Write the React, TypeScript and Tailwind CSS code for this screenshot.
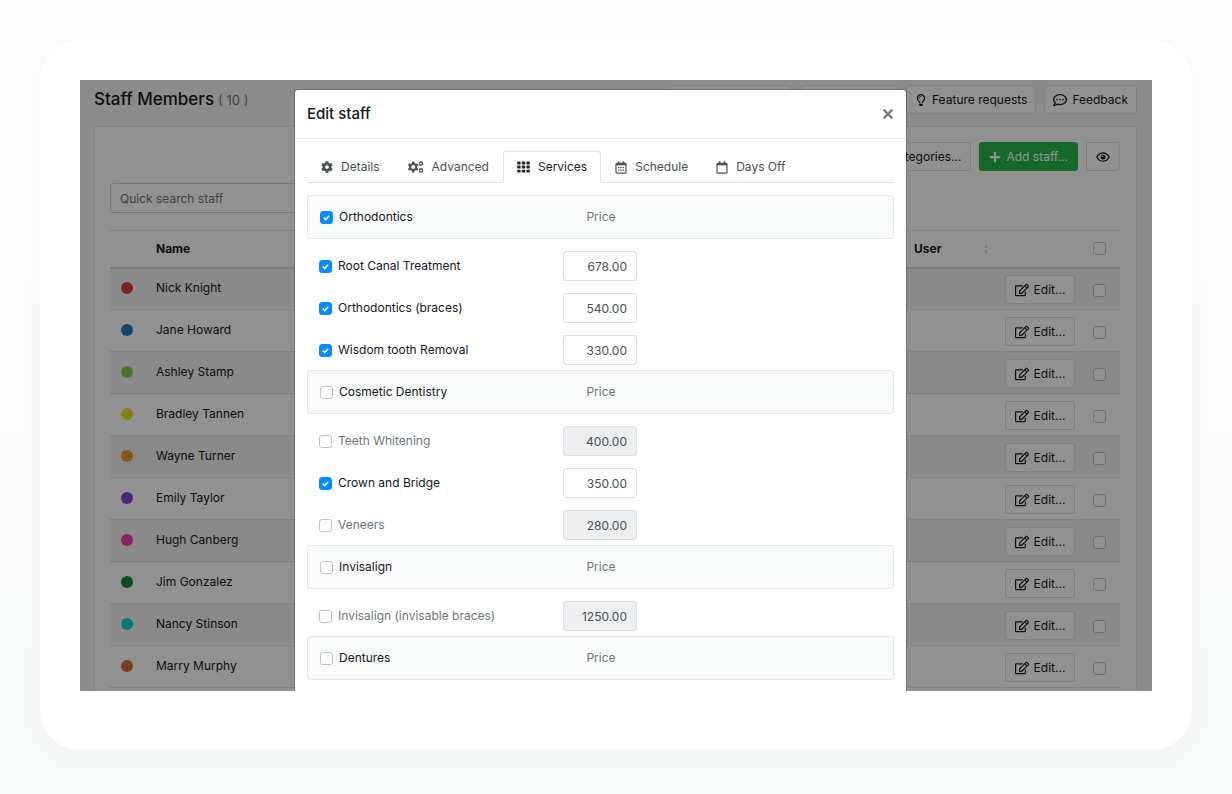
import { useState, type InputHTMLAttributes, type ReactNode } from "react";
import { FaCog, FaPlus, FaRegCommentDots, FaRegEdit, FaRegLightbulb } from "react-icons/fa";

type Service = { name: string; price: string; enabled: boolean };
type Category = { name: string; enabled: boolean; services: Service[] };

const staff = [
  { name: "Nick Knight", dot: "bg-[#e53a30]" },
  { name: "Jane Howard", dot: "bg-[#1c7fc4]" },
  { name: "Ashley Stamp", dot: "bg-[#83d146]" },
  { name: "Bradley Tannen", dot: "bg-[#ebe32a]" },
  { name: "Wayne Turner", dot: "bg-[#e69a35]" },
  { name: "Emily Taylor", dot: "bg-[#8a3fe0]" },
  { name: "Hugh Canberg", dot: "bg-[#f13cb5]" },
  { name: "Jim Gonzalez", dot: "bg-[#0c8f37]" },
  { name: "Nancy Stinson", dot: "bg-[#17d3d8]" },
  { name: "Marry Murphy", dot: "bg-[#d96b35]" },
];

const initialCategories: Category[] = [
  {
    name: "Orthodontics",
    enabled: true,
    services: [
      { name: "Root Canal Treatment", price: "678.00", enabled: true },
      { name: "Orthodontics (braces)", price: "540.00", enabled: true },
      { name: "Wisdom tooth Removal", price: "330.00", enabled: true },
    ],
  },
  {
    name: "Cosmetic Dentistry",
    enabled: false,
    services: [
      { name: "Teeth Whitening", price: "400.00", enabled: false },
      { name: "Crown and Bridge", price: "350.00", enabled: true },
      { name: "Veneers", price: "280.00", enabled: false },
    ],
  },
  {
    name: "Invisalign",
    enabled: false,
    services: [{ name: "Invisalign (invisable braces)", price: "1250.00", enabled: false }],
  },
  { name: "Dentures", enabled: false, services: [] },
];

function GearsIcon() {
  return (
    <svg viewBox="0 0 16 12" className="h-3 w-4" fill="none" stroke="currentColor" aria-hidden="true">
      <circle cx="5.2" cy="6" r="3" strokeWidth="2" />
      <path
        d="M5.2 .6v2M5.2 9.4v2M.5 3.3l1.8 1M8.1 7.7l1.8 1M.5 8.7l1.8-1M8.1 4.3l1.8-1"
        strokeWidth="2.4"
      />
      <circle cx="13" cy="2.6" r="1.6" strokeWidth="1.4" />
      <circle cx="13" cy="9.4" r="1.6" strokeWidth="1.4" />
    </svg>
  );
}

function GridIcon() {
  return (
    <svg viewBox="0 0 13 12" className="h-3 w-[13px]" fill="currentColor" aria-hidden="true">
      {[0.2, 4.8, 9.4].map((x) =>
        [0.5, 4.6, 8.7].map((y) => <rect key={`${x}-${y}`} x={x} y={y} width="3.4" height="2.9" rx=".4" />),
      )}
    </svg>
  );
}

function CalendarIcon({ days = false }: { days?: boolean }) {
  return (
    <svg viewBox="0 0 12 13" className="h-[13px] w-3" fill="none" stroke="currentColor" aria-hidden="true">
      <rect x="1" y="2.3" width="10" height="9.9" rx="1" strokeWidth="1.2" />
      <path d="M.9 3.3h10.2" strokeWidth="2" />
      <path d="M3.5 .3v2.4M8.5 .3v2.4" strokeWidth="1.6" />
      {days && <path d="M3 6.7h6M3 9.2h6" strokeWidth="1.3" strokeDasharray="1.4 .9" />}
    </svg>
  );
}

function EyeIcon() {
  return (
    <svg viewBox="0 0 14 12" className="h-3 w-3.5" fill="none" stroke="currentColor" aria-hidden="true">
      <path d="M.7 6C2.2 3.3 4.4 1.8 7 1.8S11.8 3.3 13.3 6C11.8 8.7 9.6 10.2 7 10.2S2.2 8.7 .7 6Z" strokeWidth="1.2" />
      <circle cx="7" cy="6" r="2.5" fill="currentColor" stroke="none" />
      <circle cx="6.2" cy="5.2" r=".8" fill="#fff" stroke="none" />
    </svg>
  );
}

function Checkbox(props: InputHTMLAttributes<HTMLInputElement>) {
  return (
    <span className="grid size-[13px] shrink-0 *:col-start-1 *:row-start-1">
      <input
        type="checkbox"
        className="peer size-[13px] appearance-none rounded-[3px] border border-[#bcc2c8] bg-white checked:border-[#058bff] checked:bg-[#058bff]"
        {...props}
      />
      <svg
        viewBox="0 0 13 13"
        className="pointer-events-none hidden size-[13px] text-white peer-checked:block"
        fill="none"
        stroke="currentColor"
        strokeWidth="1.6"
        aria-hidden="true"
      >
        <path d="M3.8 6.7l1.9 1.8 3.5-3.8" />
      </svg>
    </span>
  );
}

function Button({ children, className = "", label }: { children?: ReactNode; className?: string; label?: string }) {
  return (
    <button
      type="button"
      aria-label={label}
      className={`flex h-[29px] items-center gap-[5px] rounded-[3px] border border-[#dadde1] bg-white whitespace-nowrap ${className}`}
    >
      {children}
    </button>
  );
}

function StaffPage() {
  return (
    <div className="flex flex-col pt-[5px] pr-[15px] pl-3.5">
      <header className="flex items-start justify-between">
        <h1 className="flex items-baseline gap-1 text-[17px] leading-[29px] font-medium">
          Staff Members <small className="text-[13px] font-normal text-[#6c757d]">( 10 )</small>
        </h1>
        <div className="flex gap-2">
          <Button className="w-[122px]" label="Export" />
          <Button className="w-[98px]" label="Import" />
          <Button className="px-2">
            <FaRegLightbulb className="size-3" /> Feature requests
          </Button>
          <Button className="px-2">
            <FaRegCommentDots className="size-3.5" /> Feedback
          </Button>
        </div>
      </header>

      <section className="mt-[11px] flex flex-col rounded-[3px] border border-[#e2e4e7] bg-white pt-[15px] pr-4 pb-10 pl-[15px]">
        <div className="flex justify-end gap-2">
          <Button className="px-[9px]">Categories...</Button>
          <button
            type="button"
            className="flex h-[29px] items-center gap-[5px] rounded-[3px] bg-[#28b84c] px-2.5 whitespace-nowrap text-white"
          >
            <FaPlus className="size-3" /> Add staff...
          </button>
          <Button label="Visible columns" className="px-[9px]">
            <EyeIcon />
          </Button>
        </div>
        <input
          type="search"
          aria-label="Quick search staff"
          placeholder="Quick search staff"
          className="mt-3 h-[30px] w-80 rounded-[3px] border border-[#ced4da] bg-white px-[9px] placeholder:text-[#6c757d]"
        />
        <table className="mt-[17px] w-full table-fixed border-collapse text-left">
          <thead>
            <tr className="h-[37px] border-t border-b-2 border-t-[#dee2e6] border-b-[#d3d6da]">
              <th className="w-[46px]" aria-label="Colour" />
              <th className="font-bold">Name</th>
              <th className="w-[91px] font-bold">
                <span className="flex items-center justify-between pr-4">
                  User
                  <svg viewBox="0 0 6 12" className="h-3 w-1.5 text-[#cdd0d4]" fill="currentColor" aria-hidden="true">
                    <path d="M3 1l2 3.5H1zM3 11L1 7.5h4z" />
                  </svg>
                </span>
              </th>
              <th className="w-[70px]" aria-label="Actions" />
              <th className="w-[45px]">
                <span className="flex pl-[18px]">
                  <Checkbox aria-label="Select all staff" />
                </span>
              </th>
            </tr>
          </thead>
          <tbody>
            {staff.map(({ name, dot }) => (
              <tr key={name} className="h-[42px] border-b border-[#dee2e6] odd:bg-[#f2f2f2]">
                <td className="pb-0.5 pl-[11px]">
                  <span className={`block size-3 rounded-full ${dot}`} />
                </td>
                <td className="pb-0.5">{name}</td>
                <td />
                <td className="pt-0.5">
                  <Button className="w-full justify-center">
                    <FaRegEdit className="size-3.5" /> Edit...
                  </Button>
                </td>
                <td className="pt-1">
                  <span className="flex pl-[18px]">
                    <Checkbox aria-label={`Select ${name}`} />
                  </span>
                </td>
              </tr>
            ))}
          </tbody>
        </table>
      </section>
    </div>
  );
}

const tabs: { label: string; icon: ReactNode }[] = [
  { label: "Details", icon: <FaCog className="size-3" /> },
  { label: "Advanced", icon: <GearsIcon /> },
  { label: "Services", icon: <GridIcon /> },
  { label: "Schedule", icon: <CalendarIcon days /> },
  { label: "Days Off", icon: <CalendarIcon /> },
];

function EditStaffDialog() {
  const [active, setActive] = useState("Services");
  const [categories, setCategories] = useState(initialCategories);

  const toggleCategory = (index: number) =>
    setCategories((all) => all.map((c, i) => (i === index ? { ...c, enabled: !c.enabled } : c)));

  const updateService = (index: number, name: string, change: Partial<Service>) =>
    setCategories((all) =>
      all.map((c, i) =>
        i === index ? { ...c, services: c.services.map((s) => (s.name === name ? { ...s, ...change } : s)) } : c,
      ),
    );

  return (
    <div
      role="dialog"
      aria-labelledby="dialog-title"
      className="flex w-full max-w-[613px] flex-col self-stretch rounded-t border border-b-0 border-black/20 bg-white bg-clip-padding"
    >
      <header className="flex items-center justify-between border-b border-[#e9ecef] px-3 py-3">
        <h2 id="dialog-title" className="text-[15px] leading-6 font-medium">
          Edit staff
        </h2>
        <button type="button" aria-label="Close" className="text-[#7f7f7f]">
          <svg viewBox="0 0 12 12" className="size-3" fill="none" stroke="currentColor" strokeWidth="2.4">
            <path d="M1.7 1.7l8.6 8.6M10.3 1.7l-8.6 8.6" />
          </svg>
        </button>
      </header>
      <div className="flex flex-col gap-3 px-3 pt-3">
        <div role="tablist" className="flex border-b border-[#dee2e6]">
          {tabs.map(({ label, icon }) => (
            <button
              key={label}
              type="button"
              role="tab"
              aria-selected={active === label}
              onClick={() => setActive(label)}
              className="-mb-px flex h-8 items-center gap-2 rounded-t-[3px] border border-transparent px-[13px] whitespace-nowrap text-[#495057] aria-selected:border-[#dee2e6] aria-selected:border-b-white aria-selected:bg-white aria-selected:text-[#212529]"
            >
              {icon}
              {label}
            </button>
          ))}
        </div>
        <div role="tabpanel" className="flex flex-col">
          {categories.map((category, index) => (
            <section key={category.name} className="flex flex-col">
              <div className="grid h-11 grid-cols-[244px_74px] items-center rounded-[3px] border border-[#e3e7e7] bg-[#f9fbfa] px-3">
                <label className="flex items-center gap-1.5">
                  <Checkbox checked={category.enabled} onChange={() => toggleCategory(index)} />
                  {category.name}
                </label>
                <span className="text-center text-[#6c757d]">Price</span>
              </div>
              {category.services.length > 0 && (
                <ul className="flex flex-col gap-3 px-3 pt-3 pb-[5px]">
                  {category.services.map(({ name, price, enabled }) => (
                    <li key={name} className="grid grid-cols-[244px_74px] items-center">
                      <label className={`flex items-center gap-1.5 ${enabled ? "" : "text-[#6c757d]"}`}>
                        <Checkbox
                          checked={enabled}
                          onChange={() => updateService(index, name, { enabled: !enabled })}
                        />
                        {name}
                      </label>
                      <input
                        type="text"
                        aria-label={`Price of ${name}`}
                        value={price}
                        disabled={!enabled}
                        onChange={(event) => updateService(index, name, { price: event.target.value })}
                        className="h-[30px] w-full rounded-[3px] border border-[#dadee2] bg-white px-[9px] text-right text-[#495057] disabled:bg-[#eceef0]"
                      />
                    </li>
                  ))}
                </ul>
              )}
            </section>
          ))}
        </div>
      </div>
    </div>
  );
}

export default function App() {
  return (
    <div className="flex h-screen flex-col bg-linear-to-b from-[#fdfdfd] to-[#f8f9f9] px-10 pt-10 pb-11 font-[Inter,sans-serif] text-xs leading-5 text-[#14181c]">
      <main className="flex min-h-0 flex-1 flex-col rounded-[40px] bg-white px-10 pt-10 pb-[59px] shadow-[0_4px_24px_rgba(0,0,0,0.03)]">
        <div className="relative min-h-0 flex-1 overflow-hidden bg-[#f4f4f4]">
          <StaffPage />
          <div className="absolute inset-0 flex justify-center bg-black/43 pt-[9px] pr-[31px]">
            <EditStaffDialog />
          </div>
        </div>
      </main>
    </div>
  );
}
